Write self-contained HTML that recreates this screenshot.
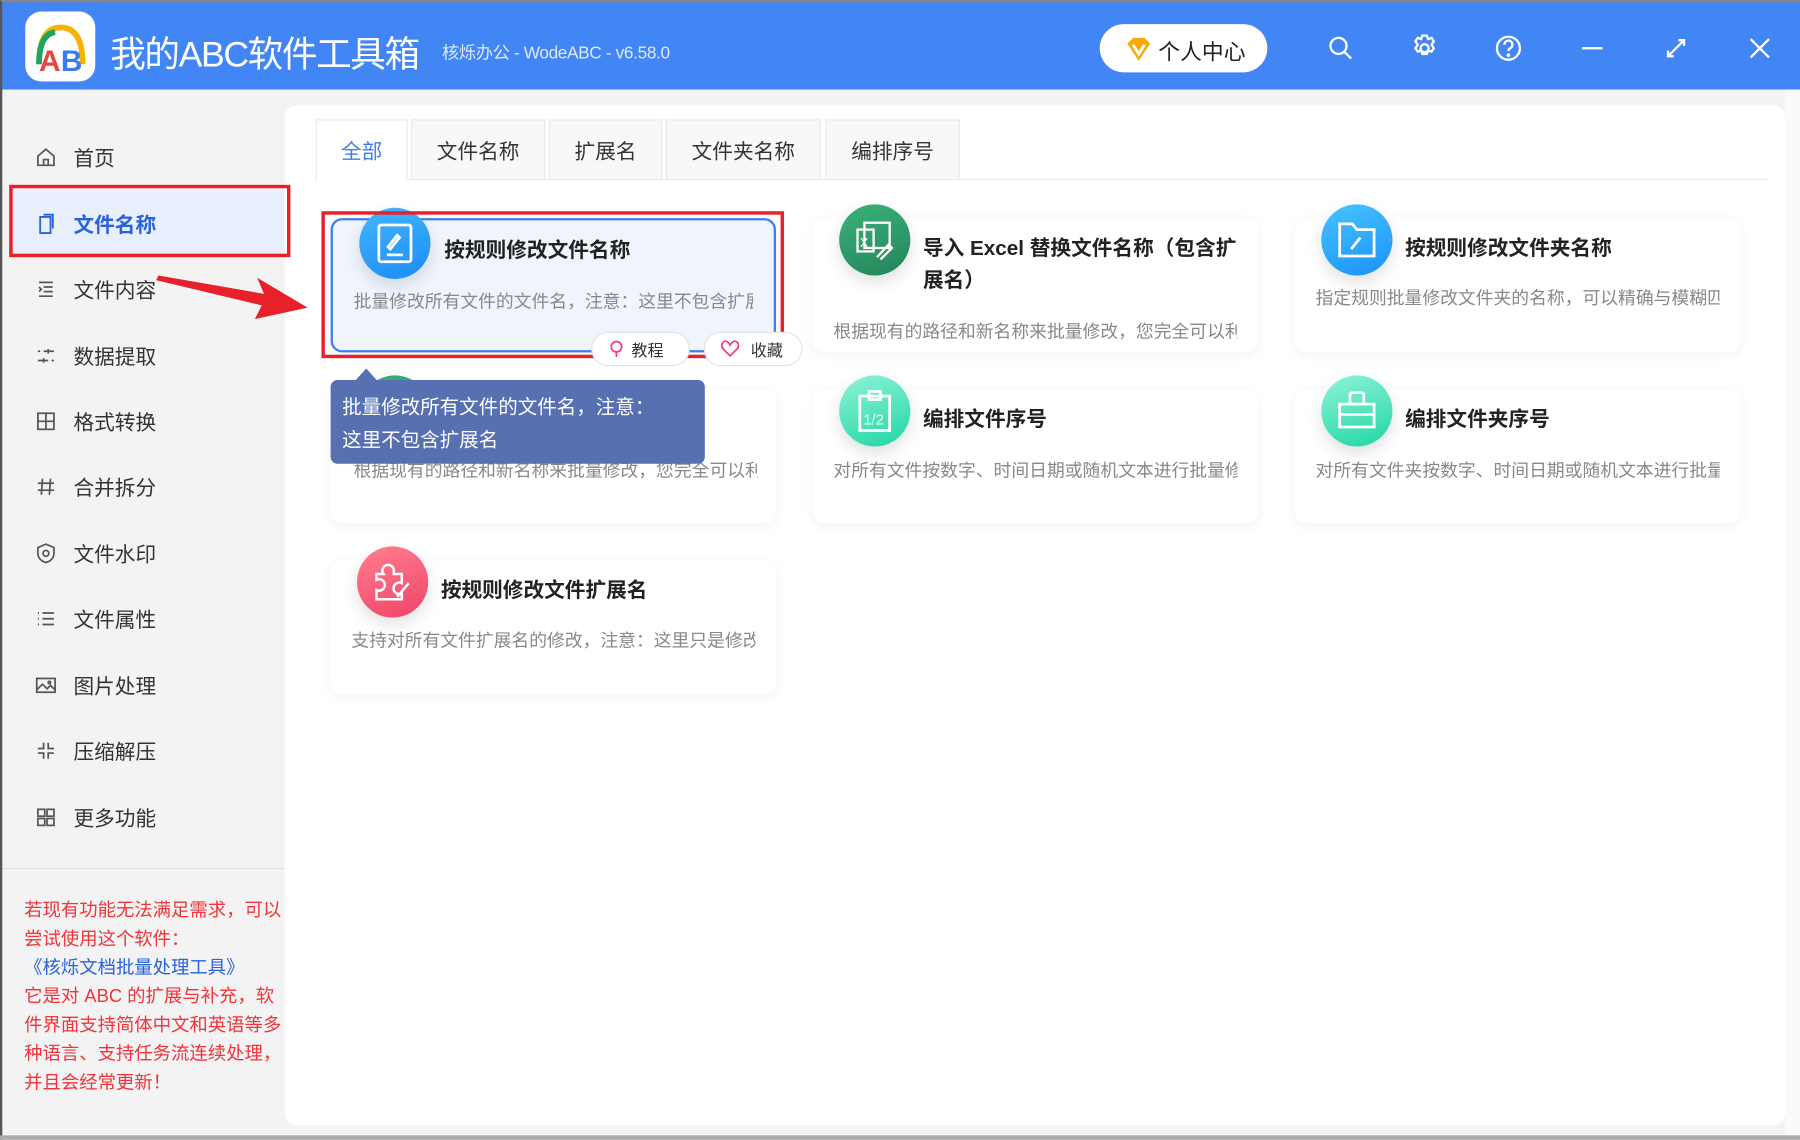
<!DOCTYPE html>
<html><head><meta charset="utf-8"><style>
*{margin:0;padding:0;box-sizing:border-box}
html,body{width:1800px;height:1140px;overflow:hidden;background:#fff}
#w{position:absolute;left:0;top:0;width:1568px;height:993px;transform:scale(1.14796);transform-origin:0 0;font-family:"Liberation Sans","Noto Sans CJK SC",sans-serif;background:#f3f3f4;overflow:hidden}
.a{position:absolute}
#hd{left:0;top:0;width:1568px;height:78px;background:#4285f4;border-top:2px solid #888;border-left:2px solid #555}
.ic{position:absolute;top:26px;width:28px;height:28px}
.side{left:30px;font-size:18px;color:#333;display:flex;align-items:center;height:30px}
.side svg{width:20px;height:20px;margin-right:14px}
.tab{position:absolute;top:104px;height:52px;background:#f7f8fa;border:1px solid #e6e8eb;border-bottom:none;font-size:18px;color:#333;text-align:center;line-height:54px}
.card{position:absolute;width:388px;height:117px;background:#fff;border-radius:10px;box-shadow:0 2px 10px rgba(0,0,0,.05)}
.circ{position:absolute;width:62px;height:62px;border-radius:50%;box-shadow:0 6px 14px rgba(0,0,0,.12)}
.tt{position:absolute;font-size:18px;font-weight:bold;color:#222;line-height:28px}
.ds{position:absolute;font-size:15.5px;color:#888;white-space:nowrap;overflow:hidden}
.rt{color:#f0343a;font-size:16px;line-height:25px;white-space:nowrap}
</style></head><body><div id="w">
<div id="hd" class="a">
 <div class="a" style="left:20px;top:8px;width:61px;height:61px;background:#fff;border-radius:14px"></div>
 <svg class="a" style="left:24px;top:14px" width="54" height="50" viewBox="0 0 54 50"><path d="M8 40 Q8 8 27 8 Q46 8 46 40" fill="none" stroke="#f6b400" stroke-width="5"/><path d="M8 40 Q8 14 22 12" fill="none" stroke="#1fa463" stroke-width="5"/><text x="8" y="46" font-size="26" font-weight="bold" fill="#e8453c" font-family="Liberation Sans">A</text><text x="27" y="46" font-size="26" font-weight="bold" fill="#3b7bf0" font-family="Liberation Sans">B</text></svg>
 <div class="a" style="left:94px;top:20px;font-size:31px;color:#fff;letter-spacing:-1.2px">我的ABC软件工具箱</div>
 <div class="a" style="left:383px;top:33px;font-size:15px;color:#dfe9fd;letter-spacing:-0.3px">核烁办公 - WodeABC - v6.58.0</div>
 <div class="a" style="left:956px;top:19px;width:146px;height:42px;background:#fff;border-radius:21px"></div>
 <svg class="a" style="left:978px;top:30px" width="24" height="22" viewBox="0 0 24 22"><path d="M2 6 L7 1 H17 L22 6 L12 21 Z" fill="#f7a90c"/><path d="M7 7 L12 15 L17 7" fill="none" stroke="#fff" stroke-width="2.5"/></svg>
 <div class="a" style="left:1007px;top:29px;font-size:19px;color:#222">个人中心</div>
 <svg class="ic" style="left:1152px" viewBox="0 0 28 28" fill="none" stroke="#fff" stroke-width="2"><circle cx="12" cy="12" r="7"/><path d="M17 17 L23 23"/></svg>
 <svg class="ic" style="left:1225px" viewBox="0 0 28 28" fill="none" stroke="#fff" stroke-width="2"><circle cx="14" cy="14" r="3.5"/><path d="M12 3h4l1 3 3-1 2 3-2 3 2 3-2 3-3-1-1 3h-4l-1-3-3 1-2-3 2-3-2-3 2-3 3 1z"/></svg>
 <svg class="ic" style="left:1298px" viewBox="0 0 28 28" fill="none" stroke="#fff" stroke-width="2"><circle cx="14" cy="14" r="10"/><path d="M10.5 11a3.5 3.5 0 1 1 5 3c-1.2.7-1.5 1.3-1.5 2.5"/><circle cx="14" cy="20" r=".6" fill="#fff"/></svg>
 <svg class="ic" style="left:1371px" viewBox="0 0 28 28" stroke="#fff" stroke-width="2"><path d="M5 14H23"/></svg>
 <svg class="ic" style="left:1444px" viewBox="0 0 28 28" fill="none" stroke="#fff" stroke-width="2"><path d="M7 21 L21 7 M16 7H21V12 M7 16V21H12"/></svg>
 <svg class="ic" style="left:1517px" viewBox="0 0 28 28" stroke="#fff" stroke-width="2"><path d="M6 6L22 22M22 6L6 22"/></svg>
</div>
<div class="a" style="left:0;top:78px;width:2px;height:915px;background:#555"></div>
<div class="a" style="left:1555px;top:78px;width:13px;height:915px;background:#fafafa"></div>
<div class="a" style="left:0;top:989px;width:1568px;height:4px;background:#aaa"></div>

<!-- sidebar -->
<div class="a" style="left:12px;top:165px;width:238px;height:57px;background:#e7effc;border-radius:4px"></div>
<div class="a side" style="top:122px"><svg viewBox="0 0 20 20" fill="none" stroke="#555" stroke-width="1.5"><path d="M3 9L10 3L17 9V17H3Z M8 17V12H12V17"/></svg>首页</div>
<div class="a side" style="top:180px;color:#2a62d9;font-weight:bold"><svg viewBox="0 0 20 20" fill="none" stroke="#2a62d9" stroke-width="1.6"><path d="M5 4H14V18H5Z M8 2H16V14"/></svg>文件名称</div>
<div class="a side" style="top:237px"><svg viewBox="0 0 20 20" fill="none" stroke="#555" stroke-width="1.5"><path d="M4 4H16M8 8H16M8 12H16M4 16H16M4 8L6 10L4 12"/></svg>文件内容</div>
<div class="a side" style="top:295px"><svg viewBox="0 0 20 20" fill="none" stroke="#555" stroke-width="1.5"><path d="M8 6H17M3 14H12M12 4V8M8 12V16M3 6H5M15 14H17"/></svg>数据提取</div>
<div class="a side" style="top:352px"><svg viewBox="0 0 20 20" fill="none" stroke="#555" stroke-width="1.5"><rect x="3" y="3" width="14" height="14"/><path d="M3 10H17M10 3V17"/></svg>格式转换</div>
<div class="a side" style="top:409px"><svg viewBox="0 0 20 20" fill="none" stroke="#555" stroke-width="1.5"><path d="M7 3L6 17M14 3L13 17M3 7H17M3 13H17"/></svg>合并拆分</div>
<div class="a side" style="top:467px"><svg viewBox="0 0 20 20" fill="none" stroke="#555" stroke-width="1.5"><path d="M10 2L17 5V10C17 14 14 17 10 18C6 17 3 14 3 10V5Z"/><circle cx="10" cy="10" r="2.5"/></svg>文件水印</div>
<div class="a side" style="top:524px"><svg viewBox="0 0 20 20" fill="none" stroke="#555" stroke-width="1.5"><path d="M7 5H17M7 10H17M7 15H17M3 5H4M3 10H4M3 15H4"/></svg>文件属性</div>
<div class="a side" style="top:582px"><svg viewBox="0 0 20 20" fill="none" stroke="#555" stroke-width="1.5"><rect x="2" y="4" width="16" height="12"/><path d="M2 14L7 9L11 13L14 10L18 14"/><circle cx="13" cy="7.5" r="1"/></svg>图片处理</div>
<div class="a side" style="top:639px"><svg viewBox="0 0 20 20" fill="none" stroke="#555" stroke-width="1.5"><path d="M8 3V8H3M12 3V8H17M8 17V12H3M12 17V12H17"/></svg>压缩解压</div>
<div class="a side" style="top:697px"><svg viewBox="0 0 20 20" fill="none" stroke="#555" stroke-width="1.5"><rect x="3" y="3" width="6" height="6"/><rect x="11" y="3" width="6" height="6"/><rect x="3" y="11" width="6" height="6"/><rect x="11" y="11" width="6" height="6"/></svg>更多功能</div>
<div class="a" style="left:2px;top:756px;width:246px;height:1px;background:#dcdcdc"></div>
<div class="a rt" style="left:21px;top:781px">若现有功能无法满足需求，可以<br>尝试使用这个软件：<br><span style="color:#2a62d9">《核烁文档批量处理工具》</span><br>它是对 ABC 的扩展与补充，软<br>件界面支持简体中文和英语等多<br>种语言、支持任务流连续处理，<br>并且会经常更新！</div>

<!-- main -->
<div class="a" style="left:248px;top:92px;width:1307px;height:888px;background:#fff;border-radius:10px"></div>
<div class="a" style="left:8px;top:161px;width:245px;height:63px;border:3px solid #e8202a"></div>
<div class="a" style="left:275px;top:156px;width:1266px;height:1px;background:#e6e8eb"></div>
<div class="tab" style="left:275px;width:80px;background:#fff;color:#3d7ef0;height:53px">全部</div>
<div class="tab" style="left:358px;width:117px">文件名称</div>
<div class="tab" style="left:478px;width:99px">扩展名</div>
<div class="tab" style="left:580px;width:135px">文件夹名称</div>
<div class="tab" style="left:719px;width:117px">编排序号</div>

<!-- cards -->
<div class="card" style="left:288px;top:190px;background:#eff4fd;border:2px solid #3d7ef0"></div>
<div class="circ" style="left:313px;top:181px;background:linear-gradient(160deg,#45b6fb,#1a8cf7)"></div>
<svg class="a" style="left:327px;top:194px" width="34" height="36" viewBox="0 0 34 36" fill="none" stroke="#fff" stroke-width="2.4"><rect x="3" y="2" width="28" height="32" rx="2"/><path d="M11 21L19 11L21 13L13 23Z M10 28H24"/></svg>
<div class="tt" style="left:387px;top:204px">按规则修改文件名称</div>
<div class="ds" style="left:308px;top:251px;width:348px">批量修改所有文件的文件名，注意：这里不包含扩展名</div>
<div class="a" style="left:280px;top:184px;width:403px;height:128px;border:3px solid #e8202a"></div>
<div class="a" style="left:515px;top:289px;width:86px;height:30px;background:#fff;border:1px solid #e2e2e2;border-radius:15px;font-size:14px;color:#333;padding:5px 0 0 34px">教程</div>
<svg class="a" style="left:531px;top:296px" width="12" height="16" viewBox="0 0 12 16" fill="none" stroke="#f03c8c" stroke-width="1.5"><circle cx="6" cy="6" r="4.5"/><path d="M6 10.5V15"/></svg>
<div class="a" style="left:613px;top:289px;width:86px;height:30px;background:#fff;border:1px solid #e2e2e2;border-radius:15px;font-size:14px;color:#333;padding:5px 0 0 40px">收藏</div>
<svg class="a" style="left:628px;top:296px" width="16" height="15" viewBox="0 0 16 15" fill="none" stroke="#f03c8c" stroke-width="1.5"><path d="M8 14L2 8C-1 5 2 0 5 1.5C6.5 2.3 7.5 3.5 8 4.5C8.5 3.5 9.5 2.3 11 1.5C14 0 17 5 14 8Z"/></svg>

<div class="card" style="left:708px;top:190px"></div>
<div class="circ" style="left:731px;top:178px;background:linear-gradient(160deg,#3bb27a,#23855a)"></div>
<svg class="a" style="left:744px;top:191px" width="36" height="36" viewBox="0 0 36 36" fill="none" stroke="#fff" stroke-width="2"><rect x="3" y="9" width="14" height="19"/><rect x="9" y="3" width="22" height="22"/><text x="5" y="24" font-size="11" fill="#fff" stroke="none" font-family="Liberation Sans">X</text><path d="M20 33L30 22L33 25L23 35"/></svg>
<div class="tt" style="left:804px;top:202px;width:280px">导入 Excel 替换文件名称（包含扩<br>展名）</div>
<div class="ds" style="left:726px;top:277px;width:352px">根据现有的路径和新名称来批量修改，您完全可以利用</div>

<div class="card" style="left:1128px;top:190px"></div>
<div class="circ" style="left:1151px;top:178px;background:linear-gradient(160deg,#47c3fd,#1a92f8)"></div>
<svg class="a" style="left:1164px;top:192px" width="36" height="34" viewBox="0 0 36 34" fill="none" stroke="#fff" stroke-width="2.4"><path d="M3 3H14L18 8H33V31H3Z"/><path d="M13 25L21 15"/></svg>
<div class="tt" style="left:1224px;top:202px">按规则修改文件夹名称</div>
<div class="ds" style="left:1146px;top:248px;width:352px">指定规则批量修改文件夹的名称，可以精确与模糊匹配</div>

<div class="card" style="left:288px;top:339px"></div>
<div class="circ" style="left:313px;top:327px;background:linear-gradient(160deg,#3bb27a,#23855a)"></div>
<div class="ds" style="left:308px;top:398px;width:352px">根据现有的路径和新名称来批量修改，您完全可以利用</div>

<div class="card" style="left:708px;top:339px"></div>
<div class="circ" style="left:731px;top:327px;background:linear-gradient(160deg,#8ff3d8,#20d6a3)"></div>
<svg class="a" style="left:746px;top:339px" width="32" height="38" viewBox="0 0 32 38" fill="none" stroke="#fff" stroke-width="2.4"><rect x="3" y="6" width="26" height="30"/><rect x="11" y="2" width="10" height="7"/><text x="6" y="31" font-size="13" fill="#fff" stroke="none" font-family="Liberation Sans">1/2</text></svg>
<div class="tt" style="left:804px;top:351px">编排文件序号</div>
<div class="ds" style="left:726px;top:398px;width:352px">对所有文件按数字、时间日期或随机文本进行批量修改</div>

<div class="card" style="left:1128px;top:339px"></div>
<div class="circ" style="left:1151px;top:327px;background:linear-gradient(160deg,#8ff3d8,#20d6a3)"></div>
<svg class="a" style="left:1164px;top:339px" width="36" height="36" viewBox="0 0 36 36" fill="none" stroke="#fff" stroke-width="2.4"><rect x="12" y="3" width="12" height="10" rx="2"/><path d="M3 13H12M24 13H33V33H3V13Z M3 22H33"/></svg>
<div class="tt" style="left:1224px;top:351px">编排文件夹序号</div>
<div class="ds" style="left:1146px;top:398px;width:352px">对所有文件夹按数字、时间日期或随机文本进行批量修改</div>

<div class="card" style="left:288px;top:488px"></div>
<div class="circ" style="left:311px;top:476px;background:linear-gradient(160deg,#ff7f8e,#f0436a)"></div>
<svg class="a" style="left:322px;top:488px" width="40" height="38" viewBox="0 0 40 38" fill="none" stroke="#fff" stroke-width="2.2"><path d="M6 12H12A5 5 0 1 1 21 10V12H28V20A5 5 0 1 0 28 29V34H6V26A5 5 0 1 0 6 17Z"/><path d="M24 32L34 20"/></svg>
<div class="tt" style="left:384px;top:500px">按规则修改文件扩展名</div>
<div class="ds" style="left:306px;top:546px;width:352px">支持对所有文件扩展名的修改，注意：这里只是修改扩展名</div>

<!-- tooltip -->
<div class="a" style="left:288px;top:331px;width:326px;height:73px;background:#5770b2;border-radius:6px"></div>
<div class="a" style="left:309px;top:321px;width:0;height:0;border-left:10px solid transparent;border-right:10px solid transparent;border-bottom:11px solid #5770b2"></div>
<div class="a" style="left:298px;top:340px;font-size:17px;color:#fff;line-height:29px">批量修改所有文件的文件名，注意：<br>这里不包含扩展名</div>

<!-- red arrow -->
<svg class="a" style="left:130px;top:230px" width="145" height="55" viewBox="0 0 145 55"><path d="M8 10L100 26L94 12L138 38L92 48L98 36L6 14Z" fill="#e8202a"/></svg>
</div></body></html>
